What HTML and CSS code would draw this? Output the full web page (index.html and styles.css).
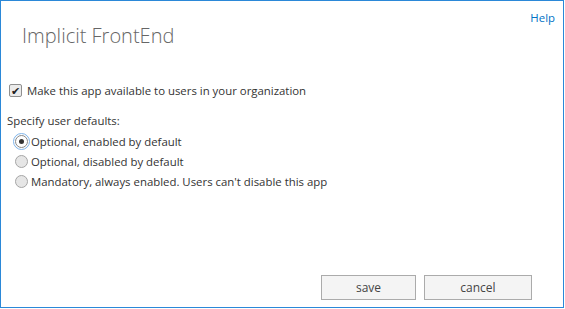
FILE: index.html
```html
<!DOCTYPE html>
<html lang="en">
<head>
    <meta charset="UTF-8">
    <title>Implicit FrontEnd</title>
    <link rel="stylesheet" href="styles.css">
</head>
<body>
    <div class="dialog">
        <div class="dialog-top">
            <h1 class="app-title">Implicit FrontEnd</h1>
            <a class="help-link" href="#">Help</a>
        </div>

        <label class="check-row">
            <span class="fake-check">&#10004;</span>
            Make this app available to users in your organization
        </label>

        <div class="defaults">
            <div class="defaults-label">Specify user defaults:</div>
            <label class="radio-row">
                <span class="fake-radio selected"></span>
                Optional, enabled by default
            </label>
            <label class="radio-row">
                <span class="fake-radio"></span>
                Optional, disabled by default
            </label>
            <label class="radio-row">
                <span class="fake-radio"></span>
                Mandatory, always enabled. Users can't disable this app
            </label>
        </div>

        <div class="actions">
            <button class="btn btn-save">save</button>
            <button class="btn btn-cancel">cancel</button>
        </div>
    </div>
</body>
</html>
```

FILE: styles.css
```css
html, body {
    margin: 0;
    height: 100%;
}
body {
    font-family: "Open Sans", Arial, sans-serif;
    font-size: 11.4px;
    color: #333;
    background-color: #fff;
}
.dialog {
    box-sizing: border-box;
    width: 564px;
    height: 308px;
    border: 1px solid #2b88d8;
    display: flex;
    flex-direction: column;
    padding: 0 6px;
}
.dialog-top {
    display: flex;
    justify-content: space-between;
    align-items: flex-start;
    height: 80px;
}
.app-title {
    margin: 21px 0 0 15px;
    font-family: "Open Sans", sans-serif;
    font-weight: 300;
    font-size: 20px;
    color: #666;
}
.help-link {
    margin: 9px 2px 0 0;
    color: #0072c6;
    text-decoration: none;
    font-size: 11.4px;
}
.check-row {
    display: flex;
    align-items: center;
    gap: 5px;
    padding-left: 2px;
    height: 18px;
}
.fake-check {
    box-sizing: border-box;
    width: 13px;
    height: 13px;
    border: 1px solid #8f8f8f;
    border-radius: 2px;
    background: #ebebeb;
    color: #222;
    font-size: 11px;
    line-height: 11px;
    text-align: center;
}
.defaults {
    margin-top: 14px;
}
.defaults-label {
    height: 18px;
}
.radio-row {
    display: flex;
    align-items: center;
    gap: 3px;
    height: 20px;
    padding-left: 8px;
}
.fake-radio {
    box-sizing: border-box;
    width: 13px;
    height: 13px;
    border: 1px solid #a6a6a6;
    border-radius: 50%;
    background: #e6e6e6;
    display: flex;
    align-items: center;
    justify-content: center;
}
.fake-radio.selected {
    outline: 1px solid #7eb4ea;
    outline-offset: 1px;
    border-color: #888;
    background: #fff;
}
.fake-radio.selected::after {
    content: "";
    width: 5px;
    height: 5px;
    border-radius: 50%;
    background: #333;
}
.actions {
    margin-top: auto;
    display: flex;
    justify-content: flex-end;
    gap: 8px;
    padding: 0 25px 7px 0;
}
.btn {
    font-family: "Open Sans", sans-serif;
    font-size: 12px;
    color: #444;
    background: #f4f4f4;
    border: 1px solid #ababab;
    height: 25px;
    padding: 0;
}
.btn-save {
    width: 95px;
}
.btn-cancel {
    width: 108px;
}
```
